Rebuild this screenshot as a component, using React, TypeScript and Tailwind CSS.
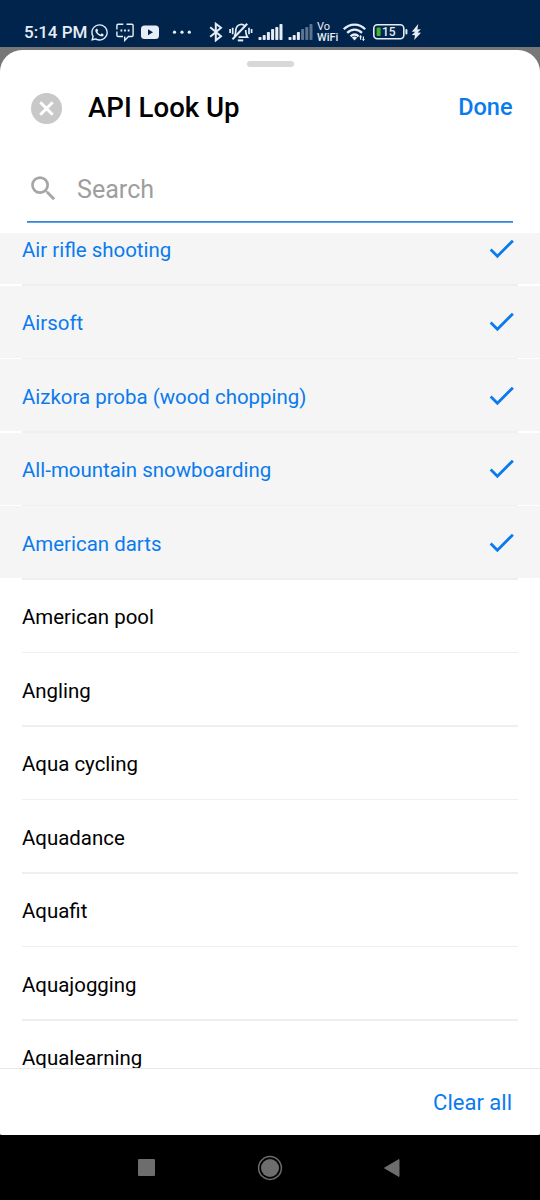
import { useState } from "react"
import { FaWhatsapp } from "react-icons/fa"
import { MdCheck, MdSearch } from "react-icons/md"

const sports = [
  "Air rifle shooting",
  "Airsoft",
  "Aizkora proba (wood chopping)",
  "All-mountain snowboarding",
  "American darts",
  "American pool",
  "Angling",
  "Aqua cycling",
  "Aquadance",
  "Aquafit",
  "Aquajogging",
  "Aqualearning",
]

function Signal({ active }: { active: number }) {
  const bars = [3, 5, 8, 11, 13, 16]
  return (
    <svg width="25" height="20" viewBox="0 0 25 20" fill="#e6edf6">
      {bars.map((h, i) => (
        <rect key={h} x={0.5 + i * 4.2} y={18 - h} width="3" height={h} rx="0.8" opacity={i < active ? 1 : 0.4} />
      ))}
    </svg>
  )
}

function StatusBar() {
  return (
    <div className="flex h-[47px] items-start bg-[#01244c] pt-[22px] pl-[25px] text-[#e6edf6]">
      <span className="-ml-px w-[67px] text-[17px] leading-[21px] font-medium whitespace-nowrap">5:14 PM</span>
      <FaWhatsapp className="mt-px -ml-px h-[19px] w-[19px]" />

      <svg className="ml-[7px]" width="18" height="20" viewBox="0 0 18 20" fill="none" stroke="#e6edf6" strokeWidth="1.4">
        <path d="M7.3 2.2H2.2Q.9 2.2.9 3.5V7.5M.9 9.5V13.2Q.9 14.5 2.2 14.5H7M10.5 2.2H15.8Q17.1 2.2 17.1 3.5V13.2Q17.1 14.5 15.8 14.5H12.5L8.7 18.4V14.5" />
        <path d="M4.5 8.5h1.8M8.1 8.5h1.8M11.7 8.5h1.8" strokeWidth="1.8" />
      </svg>

      <svg className="ml-[7px]" width="18" height="20" viewBox="0 0 18 20">
        <rect y="3.4" width="18" height="13.5" rx="3.5" fill="#e6edf6" />
        <path d="M7 7.3V13.2L12 10.25Z" fill="#01244c" />
      </svg>

      <svg className="ml-[13px]" width="20" height="20" viewBox="0 0 20 20" fill="#e6edf6">
        <circle cx="2.5" cy="10.2" r="1.6" />
        <circle cx="10" cy="10.2" r="1.6" />
        <circle cx="17.3" cy="10.2" r="1.6" />
      </svg>

      <svg className="ml-[17px]" width="14" height="20" viewBox="0 0 14 20" fill="none" stroke="#e6edf6" strokeWidth="2">
        <path d="M1.2 5.3L12 14.2L6.8 18.4V1.8L12 5.7L1.2 14.8" />
      </svg>

      <svg className="ml-[6px]" width="24" height="20" viewBox="0 0 24 20" fill="none" stroke="#e6edf6" strokeWidth="1.7">
        <path d="M5.3 14.2C7 12.6 6.6 10.5 6.8 8C7.1 5 8.8 3.1 11.6 2.5C13.4 2.3 14.8 2.9 15.8 3.9" />
        <path d="M16.7 8C16.9 11 16.7 12.6 18.5 15.2H9.5" />
        <path d="M8.8 18.4h5.4" strokeWidth="2" />
        <path d="M3.5 17.2L18.2 1.8" strokeWidth="2" />
        <path d="M1.1 7v4M3.7 5.8v6.4M20 5.8v6.4M22.6 7v4" />
      </svg>

      <div className="ml-[5px] flex gap-[5px]">
        <Signal active={6} />
        <Signal active={3} />
      </div>

      <div className="ml-1 w-[22px] text-[11px]">
        <div className="h-[10px] leading-[9px]">Vo</div>
        <div className="h-[10px] leading-[11px] font-medium">WiFi</div>
      </div>

      <svg className="ml-1" width="24" height="20" viewBox="0 0 24 20" fill="none" stroke="#e6edf6" strokeWidth="2.3">
        <path d="M.8 7.2C7 1 16 1 22.2 7.2M4.2 10.9C8.6 6.6 14.6 6.6 19 10.9M7.6 14.3C10 12.1 13.2 12.1 15.6 14.3" />
        <path d="M8.8 15.5Q11.5 13.4 14.2 15.5L11.5 18.4Z" fill="#e6edf6" stroke="none" />
        <path d="M17.6 13.8v4M20.4 14.5v4" strokeWidth="1.2" />
        <path d="M16 15.2L17.6 13L19 15.2ZM19 17L20.4 19L22 17Z" fill="#e6edf6" stroke="none" />
      </svg>

      <div className="relative mt-[2px] ml-[6px] h-[16px] w-[32px]">
        <svg width="36" height="16" viewBox="0 0 36 16" className="max-w-none">
          <rect x="0.8" y="0.8" width="30" height="14" rx="3.5" fill="none" stroke="#e6edf6" strokeWidth="1.6" />
          <rect x="3.6" y="3.5" width="4" height="8.6" rx="1" fill="#43b52c" />
          <rect x="32.4" y="5" width="2" height="5.5" rx="1" fill="#e6edf6" />
        </svg>
        <span className="absolute top-[2px] left-[9px] text-[12px] leading-[12px] font-medium">15</span>
      </div>

      <svg className="ml-[6px]" width="11" height="20" viewBox="0 0 11 20" fill="#e6edf6">
        <path d="M7.2 2L.8 9.8H4.2L.9 13L4 13.2L3.2 18L10 10.8L6.6 10.4L9.9 7.2L6.4 7.4Z" />
      </svg>
    </div>
  )
}

function NavBar() {
  return (
    <div className="flex h-[65px] items-center bg-black pl-[138px]">
      <div className="h-[17px] w-[17px] rounded-[1px] bg-[#6d6d6d]" />
      <svg className="ml-[102px]" width="26" height="26" viewBox="0 0 26 26">
        <circle cx="13" cy="13" r="11.4" fill="none" stroke="#6d6d6d" strokeWidth="1.5" />
        <circle cx="13" cy="13" r="9" fill="#6d6d6d" />
      </svg>
      <svg className="ml-[100px]" width="18" height="20" viewBox="0 0 18 20">
        <path d="M16 1.5V18.5L1.5 10Z" fill="#6d6d6d" stroke="#6d6d6d" strokeWidth="1" strokeLinejoin="round" />
      </svg>
    </div>
  )
}

export default function App() {
  const [selected, setSelected] = useState<string[]>(sports.slice(0, 5))

  const toggle = (name: string) => {
    setSelected(selected.includes(name) ? selected.filter((s) => s !== name) : [...selected, name])
  }

  return (
    <div className="flex h-[1200px] w-[540px] flex-col overflow-hidden bg-[#777777] font-['Roboto',sans-serif]">
      <StatusBar />

      <div className="mt-[3px] flex min-h-0 flex-1 flex-col overflow-hidden rounded-t-[22px] rounded-b-[2px] bg-white">
        <div className="mx-auto mt-[11px] h-[6px] w-[47px] shrink-0 rounded-full bg-[#d8d8d8]" />

        <header className="flex h-[82px] shrink-0 items-center pr-[27.5px] pl-[31px]">
          <button className="flex h-[31px] w-[31px] items-center justify-center rounded-full bg-[#c8c8c8]">
            <svg width="15" height="15" viewBox="0 0 15 15" stroke="white" strokeWidth="3">
              <path d="M1.3 1.3L13.7 13.7M13.7 1.3L1.3 13.7" />
            </svg>
          </button>
          <h1 className="ml-[26px] flex-1 pb-px text-[27.6px] font-medium text-black">API Look Up</h1>
          <button className="pb-px text-[23.5px] font-medium text-[#0a7bee]">Done</button>
        </header>

        <div className="mx-[27px] flex h-[71px] shrink-0 items-center pt-[7px]">
          <MdSearch className="h-[33px] w-[33px] text-[#a6a6a6]" />
          <span className="ml-[17px] pt-[3px] text-[25.1px] text-[#9e9e9e]">Search</span>
        </div>
        <div className="mx-[27px] mt-px h-[2px] shrink-0 bg-gradient-to-b from-[#2079cc] to-[#6fb0e8]" />

        <div className="mt-[10px] min-h-0 flex-1 overflow-hidden">
          <div className="-mt-[20.8px]">
            {sports.map((name) => {
              const active = selected.includes(name)
              return (
                <div key={name}>
                  <div
                    onClick={() => toggle(name)}
                    className={`flex h-[72px] items-center justify-between pr-[22px] pl-[22px] text-[20.45px] ${active ? "bg-[#f5f5f5] text-[#0a7bee]" : "text-black"}`}
                  >
                    <span className="pt-[4px]">{name}</span>
                    {active && <MdCheck className="h-[33px] w-[33px]" />}
                  </div>
                  <div className="mx-[22px] h-[1.5px] bg-[#efefef]" />
                </div>
              )
            })}
          </div>
        </div>

        <footer className="flex h-[67px] shrink-0 items-center justify-end border-t border-[#e8e8e8] pt-px pr-[28px]">
          <button onClick={() => setSelected([])} className="text-[22px] text-[#0a7bee]">
            Clear all
          </button>
        </footer>
      </div>

      <NavBar />
    </div>
  )
}
